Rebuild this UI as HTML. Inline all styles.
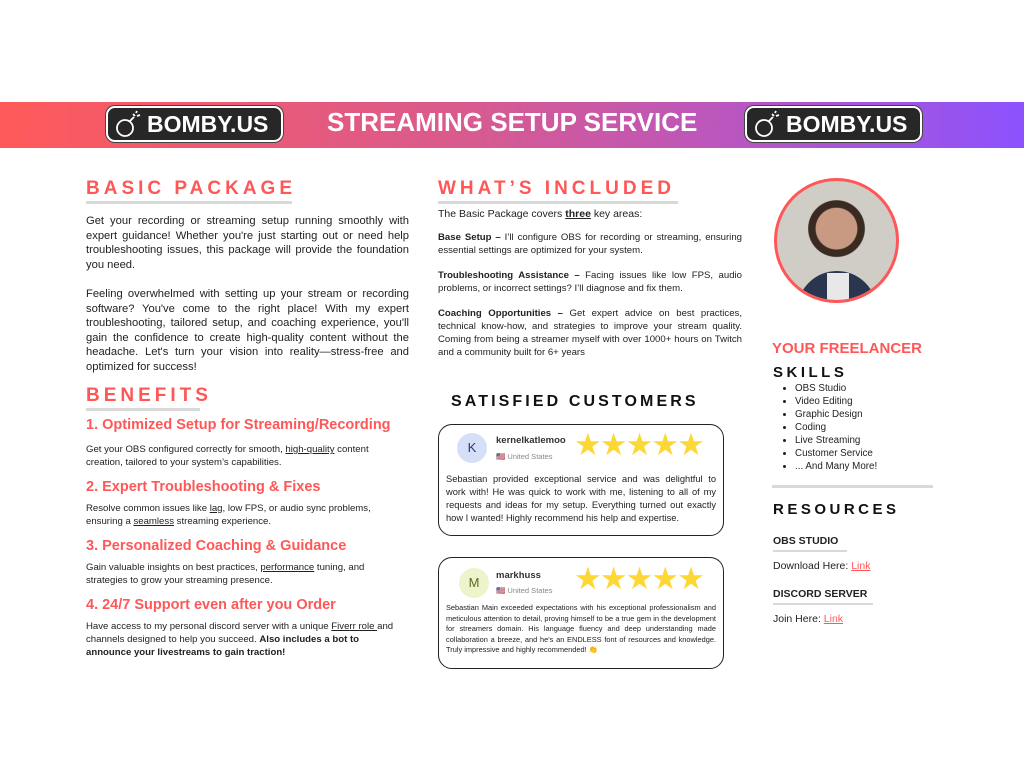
<!DOCTYPE html>
<html><head><meta charset="utf-8"><style>
*{margin:0;padding:0;box-sizing:border-box}
body{width:1024px;height:768px;background:#fff;position:relative;overflow:hidden;font-family:"Liberation Sans",sans-serif;color:#222}
.a{position:absolute}
.banner{left:0;top:102px;width:1024px;height:46px;background:linear-gradient(90deg,#ff5a5a 0%,#d95a8e 45%,#b556c6 75%,#8c52ff 100%)}
.logo{background:#272727;border:2px solid #fff;border-radius:9px;height:36px;color:#fff;font-weight:bold;font-size:23px;display:flex;align-items:center;padding-left:39px;box-shadow:0 0 0 1px #444}
.h{color:#ff5757;font-weight:bold;letter-spacing:4px;font-size:19px}
.bar{background:#d9d9d9;height:3px}
.p{font-size:11.2px;line-height:14.5px;text-align:justify}
.sub{color:#ff5757;font-weight:bold;font-size:14.5px}
.s{font-size:9.6px;line-height:13px}
.card{border:1.3px solid #222;border-radius:14px;background:#fff}
.star{color:#fdd835;font-size:31px;letter-spacing:-2px}
ul{list-style:disc;padding-left:22px;font-size:10px;line-height:13px}
a{color:#ff5757;text-decoration:underline}
.blk{color:#111;font-weight:bold;letter-spacing:3.5px;font-size:15px}
</style></head><body>
<div class="a banner"></div>
<div class="a logo" style="left:106px;top:106px;width:177px">BOMBY.US</div>
<div class="a logo" style="left:745px;top:106px;width:177px">BOMBY.US</div>
<svg class="a" style="left:112px;top:110px" width="32" height="30" viewBox="0 0 32 30" fill="none" stroke="#fff" stroke-width="1.8"><circle cx="13" cy="18" r="8"/><path d="M18 11l4-4M21 4l2 2M24 3l1-2M25 6l3-1"/></svg>
<svg class="a" style="left:751px;top:110px" width="32" height="30" viewBox="0 0 32 30" fill="none" stroke="#fff" stroke-width="1.8"><circle cx="13" cy="18" r="8"/><path d="M18 11l4-4M21 4l2 2M24 3l1-2M25 6l3-1"/></svg>
<div class="a" style="left:327px;top:107px;color:#fff;font-weight:bold;font-size:26px">STREAMING SETUP SERVICE</div>

<div class="a h" style="left:86px;top:178px">BASIC PACKAGE</div>
<div class="a bar" style="left:86px;top:201px;width:206px"></div>
<div class="a p" style="left:86px;top:214px;width:323px">Get your recording or streaming setup running smoothly with expert guidance! Whether you're just starting out or need help troubleshooting issues, this package will provide the foundation you need.</div>
<div class="a p" style="left:86px;top:287px;width:323px">Feeling overwhelmed with setting up your stream or recording software? You've come to the right place! With my expert troubleshooting, tailored setup, and coaching experience, you'll gain the confidence to create high-quality content without the headache. Let's turn your vision into reality—stress-free and optimized for success!</div>
<div class="a h" style="left:86px;top:385px">BENEFITS</div>
<div class="a bar" style="left:86px;top:408px;width:114px"></div>
<div class="a sub" style="left:86px;top:417px">1. Optimized Setup for Streaming/Recording</div>
<div class="a s" style="left:86px;top:443px;width:310px">Get your OBS configured correctly for smooth, <u>high-quality</u> content creation, tailored to your system’s capabilities.</div>
<div class="a sub" style="left:86px;top:479px">2. Expert Troubleshooting &amp; Fixes</div>
<div class="a s" style="left:86px;top:502px;width:310px">Resolve common issues like <u>lag</u>, low FPS, or audio sync problems, ensuring a <u>seamless</u> streaming experience.</div>
<div class="a sub" style="left:86px;top:538px">3. Personalized Coaching &amp; Guidance</div>
<div class="a s" style="left:86px;top:561px;width:310px">Gain valuable insights on best practices, <u>performance</u> tuning, and strategies to grow your streaming presence.</div>
<div class="a sub" style="left:86px;top:597px">4. 24/7 Support even after you Order</div>
<div class="a s" style="left:86px;top:620px;width:310px">Have access to my personal discord server with a unique <u>Fiverr role </u>and channels designed to help you succeed. <b>Also includes a bot to announce your livestreams to gain traction!</b></div>

<div class="a h" style="left:438px;top:178px">WHAT’S INCLUDED</div>
<div class="a bar" style="left:438px;top:201px;width:240px"></div>
<div class="a" style="left:438px;top:208px;font-size:10.5px">The Basic Package covers <b><u>three</u></b> key areas:</div>
<div class="a p" style="left:438px;top:231px;width:304px;font-size:9.6px;line-height:13px"><b>Base Setup –</b> I’ll configure OBS for recording or streaming, ensuring essential settings are optimized for your system.</div>
<div class="a p" style="left:438px;top:269px;width:304px;font-size:9.6px;line-height:13px"><b>Troubleshooting Assistance –</b> Facing issues like low FPS, audio problems, or incorrect settings? I’ll diagnose and fix them.</div>
<div class="a p" style="left:438px;top:307px;width:304px;font-size:9.6px;line-height:13px"><b>Coaching Opportunities –</b> Get expert advice on best practices, technical know-how, and strategies to improve your stream quality. Coming from being a streamer myself with over 1000+ hours on Twitch and a community built for 6+ years</div>
<div class="a blk" style="left:451px;top:393px;font-size:16px;letter-spacing:3.1px">SATISFIED CUSTOMERS</div>

<div class="a card" style="left:438px;top:424px;width:286px;height:112px"></div>
<div class="a" style="left:457px;top:433px;width:30px;height:30px;border-radius:50%;background:#d6dff8;color:#2b3a6b;font-size:13px;text-align:center;line-height:30px">K</div>
<div class="a" style="left:496px;top:435px;font-size:9.5px;font-weight:bold;color:#333">kernelkatlemoo</div>
<div class="a" style="left:496px;top:452px;font-size:7.5px;color:#888">🇺🇸 United States</div>
<div class="a star" style="left:574px;top:427px">★★★★★</div>
<div class="a p" style="left:446px;top:473px;width:270px;font-size:9.3px;line-height:13px">Sebastian provided exceptional service and was delightful to work with! He was quick to work with me, listening to all of my requests and ideas for my setup. Everything turned out exactly how I wanted! Highly recommend his help and expertise.</div>

<div class="a card" style="left:438px;top:557px;width:286px;height:112px"></div>
<div class="a" style="left:459px;top:568px;width:30px;height:30px;border-radius:50%;background:#eef3cc;color:#5a6a20;font-size:13px;text-align:center;line-height:30px">M</div>
<div class="a" style="left:496px;top:570px;font-size:9.5px;font-weight:bold;color:#333">markhuss</div>
<div class="a" style="left:496px;top:586px;font-size:7.5px;color:#888">🇺🇸 United States</div>
<div class="a star" style="left:574px;top:561px">★★★★★</div>
<div class="a p" style="left:446px;top:603px;width:270px;font-size:7.4px;line-height:10.6px">Sebastian Main exceeded expectations with his exceptional professionalism and meticulous attention to detail, proving himself to be a true gem in the development for streamers domain. His language fluency and deep understanding made collaboration a breeze, and he's an ENDLESS font of resources and knowledge. Truly impressive and highly recommended! 👏</div>

<div class="a" style="left:774px;top:178px;width:125px;height:125px;border-radius:50%;border:3px solid #ff5757;background:radial-gradient(circle at 50% 40%,#c99a82 0 22%,#3a2a22 23% 30%,#d0ccc6 31%);overflow:hidden">
<div class="a" style="left:20px;top:90px;width:80px;height:40px;border-radius:40px 40px 0 0;background:#2a3550"></div>
<div class="a" style="left:50px;top:92px;width:22px;height:30px;background:#e8e8ea"></div>
</div>
<div class="a" style="left:772px;top:340px;color:#ff5757;font-weight:bold;font-size:15px">YOUR FREELANCER</div>
<div class="a blk" style="left:773px;top:364px">SKILLS</div>
<ul class="a" style="left:773px;top:382px;font-size:9.8px"><li>OBS Studio</li><li>Video Editing</li><li>Graphic Design</li><li>Coding</li><li>Live Streaming</li><li>Customer Service</li><li>... And Many More!</li></ul>
<div class="a bar" style="left:772px;top:485px;width:161px"></div>
<div class="a blk" style="left:773px;top:501px">RESOURCES</div>
<div class="a" style="left:773px;top:535px;font-size:10.5px;font-weight:bold">OBS STUDIO</div>
<div class="a bar" style="left:773px;top:550px;width:74px;height:2px"></div>
<div class="a" style="left:773px;top:560px;font-size:10.5px">Download Here: <a>Link</a></div>
<div class="a" style="left:773px;top:588px;font-size:10.5px;font-weight:bold">DISCORD SERVER</div>
<div class="a bar" style="left:773px;top:603px;width:100px;height:2px"></div>
<div class="a" style="left:773px;top:613px;font-size:10.5px">Join Here: <a>Link</a></div>
</body></html>
